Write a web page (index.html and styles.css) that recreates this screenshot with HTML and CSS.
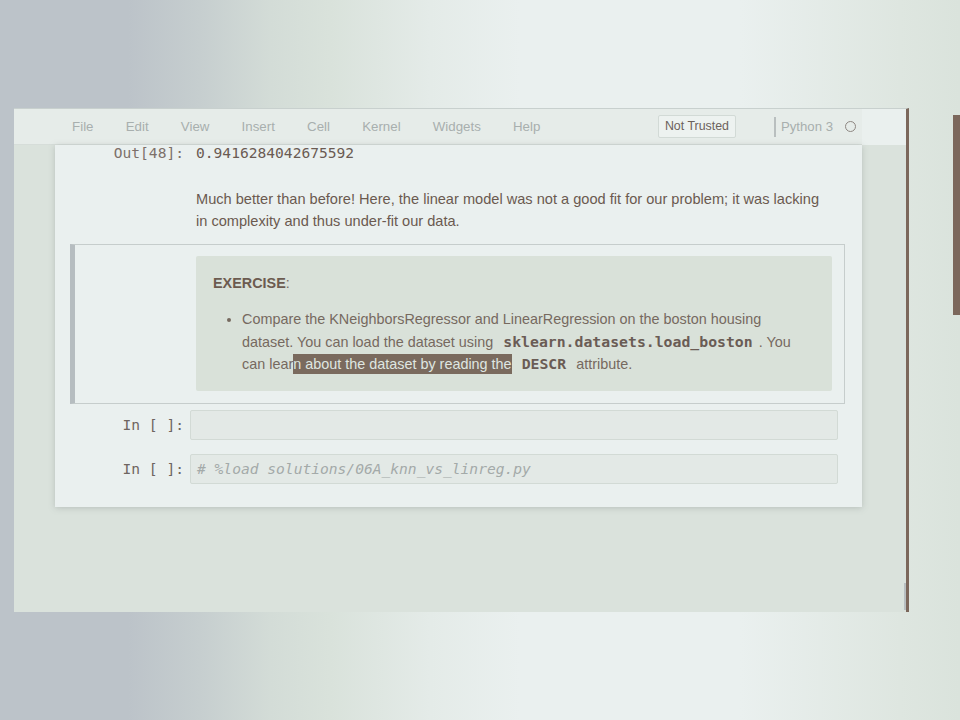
FILE: index.html
```html
<!DOCTYPE html>
<html lang="en">
<head>
<meta charset="utf-8">
<title>Notebook</title>
<link rel="stylesheet" href="styles.css">
</head>
<body>
<div class="page">
  <div class="window">
    <div class="header">
      <div class="menubar">
        <nav class="menus">
          <span class="menu">File</span>
          <span class="menu">Edit</span>
          <span class="menu">View</span>
          <span class="menu">Insert</span>
          <span class="menu">Cell</span>
          <span class="menu">Kernel</span>
          <span class="menu">Widgets</span>
          <span class="menu">Help</span>
        </nav>
        <div class="status">
          <span class="trust">Not Trusted</span>
          <span class="sep"></span>
          <span class="kernel">Python 3</span>
          <span class="kernel-dot"></span>
        </div>
      </div>
    </div>
    <div class="body">
      <div class="side"></div>
      <div class="notebook">
        <div class="output-row">
          <div class="prompt out">Out[48]:</div>
          <div class="out-value">0.9416284042675592</div>
        </div>

        <div class="cell text">
          <div class="prompt"></div>
          <div class="rendered">
            <p>Much better than before! Here, the linear model was not a good fit for our problem; it was lacking in complexity and thus under-fit our data.</p>
          </div>
        </div>

        <div class="cell selected">
          <div class="prompt"></div>
          <div class="rendered">
            <div class="exercise">
              <p class="ex-title"><b>EXERCISE</b>:</p>
              <ul class="ex-list">
                <li>Compare the KNeighborsRegressor and LinearRegression on the boston housing dataset. You can load the dataset using <code>sklearn.datasets.load_boston</code>. You can lear<span class="sel">n about the dataset by reading the</span> <code>DESCR</code> attribute.</li>
              </ul>
            </div>
          </div>
        </div>

        <div class="cell code">
          <div class="prompt in">In&nbsp;[&nbsp;]:</div>
          <div class="input"></div>
        </div>

        <div class="cell code">
          <div class="prompt in">In&nbsp;[&nbsp;]:</div>
          <div class="input"><span class="comment"># %load solutions/06A_knn_vs_linreg.py</span></div>
        </div>
      </div>
      <div class="side right"></div>
    </div>
    <div class="thumb"></div>
  </div>
  <div class="edge-bar"></div>
</div>
</body>
</html>
```
FILE: styles.css
```css
* { box-sizing: border-box; }

html, body {
  margin: 0;
  padding: 0;
}

body {
  width: 960px;
  height: 720px;
  overflow: hidden;
  font-family: "Liberation Sans", Arial, sans-serif;
  background: linear-gradient(90deg,
    #bcc3c9 0px, #bcc3c9 128px, #c6cecf 200px, #d3dcd7 270px, #d9e2db 330px,
    #e4ebe8 430px, #eaf0ef 520px, #eaf0ef 740px, #dee6e0 900px, #dae3dc 960px);
}

.page {
  display: flex;
  align-items: flex-start;
  padding-top: 108px;
  padding-left: 14px;
}

.window {
  position: relative;
  width: 895px;
  height: 504px;
  background: #dae2dc;
  border-top: 1px solid #c8d0ce;
  border-right: 3px solid #7b675b;
  display: flex;
  flex-direction: column;
  overflow: hidden;
}

.header {
  height: 36px;
  flex: 0 0 36px;
  background: #eaf0ee;
}

.menubar {
  width: 848px;
  height: 36px;
  display: flex;
  align-items: center;
  padding-left: 42px;
  padding-right: 6px;
  background: #e6ece9;
  border-bottom: 1px solid #d6ddd9;
}

.menus {
  display: flex;
  align-items: center;
}

.menu {
  padding: 0 16.1px;
  font-size: 13.3px;
  color: #a8afae;
}

.status {
  margin-left: auto;
  display: flex;
  align-items: center;
}

.trust {
  display: inline-block;
  height: 23px;
  line-height: 21px;
  padding: 0 6px;
  font-size: 12.4px;
  color: #6c625c;
  background: #edf2f0;
  border: 1px solid #d2dad6;
  border-radius: 2px;
}

.sep {
  width: 2px;
  height: 20px;
  margin-left: 38px;
  margin-right: 5px;
  background: #b9bfbf;
}

.kernel {
  font-size: 13.2px;
  color: #a8afae;
}

.kernel-dot {
  width: 11px;
  height: 11px;
  margin-left: 12px;
  border: 1.6px solid #8e8782;
  border-radius: 50%;
}

.body {
  flex: 1;
  display: flex;
  align-items: flex-start;
}

.side {
  flex: 0 0 41px;
  align-self: stretch;
}

.side.right {
  flex: 1;
}

.notebook {
  flex: 0 0 807px;
  background: #eaf0ef;
  padding: 0 17px 17px 15px;
  box-shadow: 0 1px 6px rgba(120, 130, 125, 0.35);
}

.prompt {
  flex: 0 0 113px;
  text-align: right;
  font-family: "DejaVu Sans Mono", "Liberation Mono", monospace;
  font-size: 14.6px;
}

.output-row {
  display: flex;
  padding-left: 1px;
  padding-top: 1px;
  line-height: 14px;
}

.prompt.out {
  color: #7d706a;
}

.out-value {
  padding-left: 12px;
  font-family: "DejaVu Sans Mono", "Liberation Mono", monospace;
  font-size: 14.6px;
  color: #6a5b53;
}

.cell {
  display: flex;
  padding: 5px 6px 5px 0;
  border: 1px solid transparent;
}

.rendered {
  flex: 1;
  margin-left: 6px;
  padding: 7px 6px;
}

.rendered p {
  margin: 0;
}

.cell.text {
  margin-top: 15px;
}

.cell.text .rendered {
  font-size: 14.6px;
  line-height: 22px;
  color: #6b5a50;
}

.cell.selected {
  margin-top: -1px;
  border-color: #c6cdcc;
  border-left: 5px solid #b6bdc0;
}

.cell.selected .rendered {
  padding-top: 6px;
  padding-bottom: 7px;
}

.cell.selected .prompt {
  flex-basis: 109px;
}

.exercise {
  background: #d9e1d9;
  padding: 16px 26px 15px 17px;
  font-size: 14.4px;
  color: #76695f;
  border-radius: 2px;
}

.ex-title {
  line-height: 22px;
  color: #7a6c63;
}

.ex-title b {
  color: #6c5b50;
}

.ex-list {
  margin: 15px 0 0 0;
  padding-left: 29px;
  line-height: 21.5px;
  list-style: disc;
}

.ex-list code {
  font-family: "DejaVu Sans Mono", "Liberation Mono", monospace;
  font-weight: bold;
  font-size: 14.8px;
  color: #6a5c55;
  padding: 0 6px;
}

.sel {
  background: #7a6a5e;
  color: #dfe6e1;
  padding: 2px 0;
}

.cell.code {
  align-items: center;
}

.prompt.in {
  color: #6e6560;
}

.input {
  flex: 1;
  margin-left: 6px;
  height: 30px;
  padding: 0 6px;
  line-height: 28px;
  background: #e3e9e6;
  border: 1px solid #d2dad5;
  border-radius: 2px;
  font-family: "DejaVu Sans Mono", "Liberation Mono", monospace;
  font-size: 14.6px;
}

.cell.code + .cell.code {
  margin-top: 2px;
}

.comment {
  font-style: italic;
  color: #a3aaa9;
}

.thumb {
  position: absolute;
  right: 0;
  bottom: 2px;
  width: 2px;
  height: 27px;
  background: #b8bfc1;
}

.edge-bar {
  margin-left: auto;
  margin-top: 7px;
  width: 7px;
  height: 200px;
  background: #7b675b;
}
```
